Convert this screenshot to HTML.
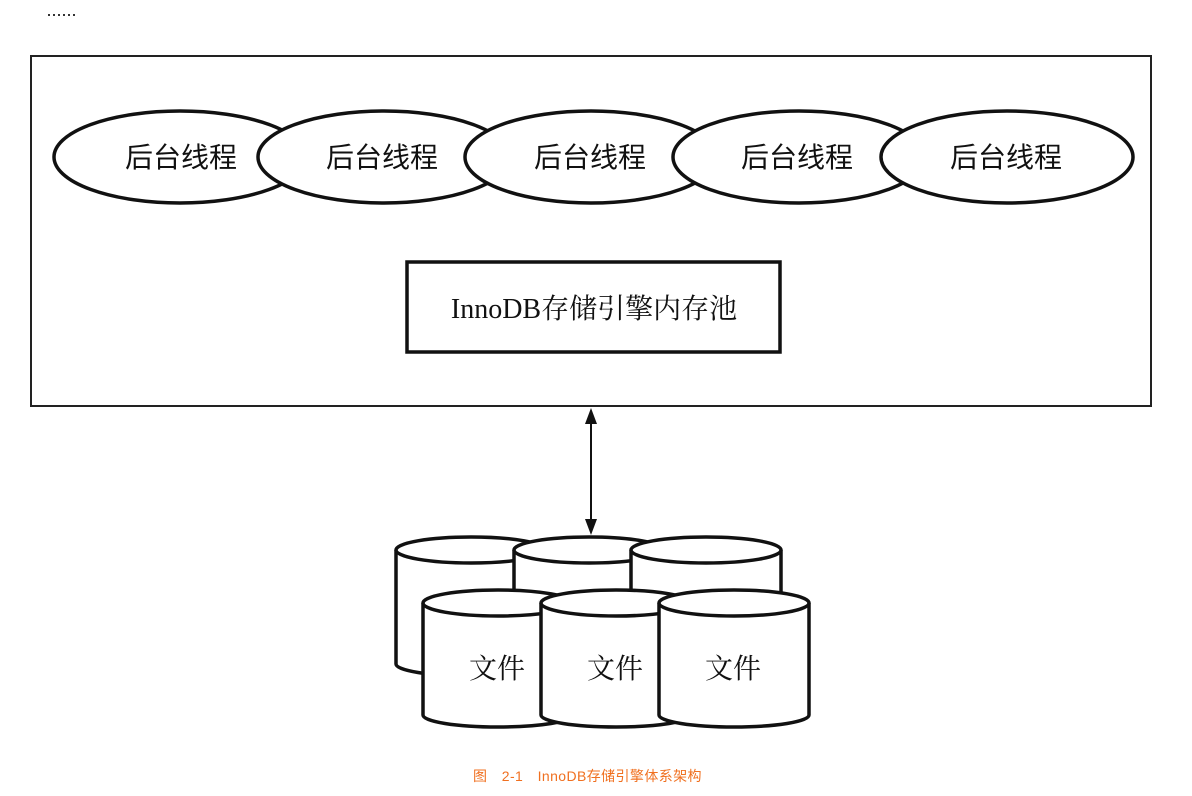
<!DOCTYPE html>
<html><head><meta charset="utf-8"><style>
html,body{margin:0;padding:0;background:#fff;width:1192px;height:796px;overflow:hidden}
svg{display:block}
</style></head><body>
<svg width="1192" height="796" viewBox="0 0 1192 796" xmlns="http://www.w3.org/2000/svg">
<g fill="#333">
<rect x="48" y="14" width="2" height="2"/><rect x="53" y="14" width="2" height="2"/><rect x="58" y="14" width="2" height="2"/><rect x="63" y="14" width="2" height="2"/><rect x="68" y="14" width="2" height="2"/><rect x="73" y="14" width="2" height="2"/>
</g>
<rect x="31" y="56" width="1120" height="350" fill="#fff" stroke="#222" stroke-width="2"/>
<g fill="#fff" stroke="#111" stroke-width="3.5">
<ellipse cx="180" cy="157" rx="126" ry="46"/>
<ellipse cx="384" cy="157" rx="126" ry="46"/>
<ellipse cx="591" cy="157" rx="126" ry="46"/>
<ellipse cx="799" cy="157" rx="126" ry="46"/>
<ellipse cx="1007" cy="157" rx="126" ry="46"/>
</g>
<g font-family="'Noto Sans CJK SC','WenQuanYi Zen Hei',sans-serif" font-size="28" fill="#111" text-anchor="middle">
<text x="181" y="167">后台线程</text>
<text x="382" y="167">后台线程</text>
<text x="590" y="167">后台线程</text>
<text x="797" y="167">后台线程</text>
<text x="1006" y="167">后台线程</text>
</g>
<rect x="407" y="262" width="373" height="90" fill="#fff" stroke="#111" stroke-width="3.5"/>
<text x="594" y="318" text-anchor="middle" font-family="'Liberation Serif','Noto Serif CJK SC',serif" font-size="28" fill="#111">InnoDB存储引擎内存池</text>
<line x1="591" y1="418" x2="591" y2="526" stroke="#111" stroke-width="2"/>
<polygon points="591,408 585,424 597,424" fill="#111"/>
<polygon points="591,535 585,519 597,519" fill="#111"/>
<g fill="#fff" stroke="#111" stroke-width="3.5">
<path d="M396,550 L396,664 A75,12 0 0 0 546,664 L546,550"/>
<ellipse cx="471" cy="550" rx="75" ry="13"/>
<path d="M514,550 L514,664 A75,12 0 0 0 664,664 L664,550"/>
<ellipse cx="589" cy="550" rx="75" ry="13"/>
<path d="M631,550 L631,664 A75,12 0 0 0 781,664 L781,550"/>
<ellipse cx="706" cy="550" rx="75" ry="13"/>
<path d="M423,603 L423,715 A75,12 0 0 0 573,715 L573,603"/>
<ellipse cx="498" cy="603" rx="75" ry="13"/>
<path d="M541,603 L541,715 A75,12 0 0 0 691,715 L691,603"/>
<ellipse cx="616" cy="603" rx="75" ry="13"/>
<path d="M659,603 L659,715 A75,12 0 0 0 809,715 L809,603"/>
<ellipse cx="734" cy="603" rx="75" ry="13"/>
</g>
<g font-family="'Noto Serif CJK SC','Noto Sans CJK SC',serif" font-size="28" fill="#111" text-anchor="middle">
<text x="497" y="678">文件</text>
<text x="615" y="678">文件</text>
<text x="733" y="678">文件</text>
</g>
<text x="473" y="781" font-family="'Liberation Sans','Noto Sans CJK SC',sans-serif" font-size="14" letter-spacing="0.4" fill="#f07020" xml:space="preserve">图　2-1　InnoDB存储引擎体系架构</text>
</svg>
</body></html>
